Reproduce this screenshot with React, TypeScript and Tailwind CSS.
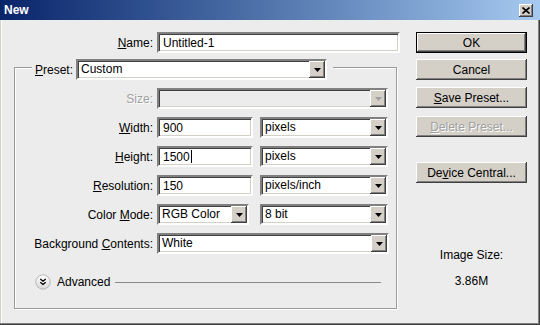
import React from "react";

const sunken =
  "border-2 border-t-[#808080] border-l-[#808080] border-b-white border-r-white shadow-[inset_1px_1px_0_#404040,inset_-1px_-1px_0_#d4d0c8]";
const raised =
  "bg-[#d4d0c8] shadow-[inset_-1px_-1px_0_#404040,inset_1px_1px_0_#ffffff,inset_-2px_-2px_0_#808080]";
const etched = "[text-shadow:1px_1px_0_#ffffff]";

function Arrow({ disabled }: { disabled?: boolean }) {
  return (
    <div className={`w-[16px] h-full flex items-center justify-center ${raised}`}>
      <svg width="7" height="4" viewBox="0 0 7 4">
        <polygon points="0,0 7,0 3.5,4" fill={disabled ? "#a0a0a0" : "#000"} />
      </svg>
    </div>
  );
}

function Select({ value, width, disabled }: { value?: string; width: string; disabled?: boolean }) {
  return (
    <div className={`${width} h-[21px] flex ${sunken} ${disabled ? "bg-[#ececec]" : "bg-white"}`}>
      <div className="flex-1 pl-[3px] leading-[17px]">{value}</div>
      <Arrow disabled={disabled} />
    </div>
  );
}

function Input({ value, width, caret }: { value: string; width: string; caret?: boolean }) {
  return (
    <div className={`${width} h-[21px] bg-white flex items-center pl-[4px] ${sunken}`}>
      <span>{value}</span>
      {caret && <span className="w-px h-[13px] bg-black ml-px" />}
    </div>
  );
}

function Label({ children, disabled }: { children: React.ReactNode; disabled?: boolean }) {
  return (
    <div className={`w-[142px] pr-[4px] text-right ${disabled ? `text-[#a0a0a0] ${etched}` : ""}`}>
      {children}
    </div>
  );
}

function Row({
  label,
  children,
  disabled,
  gap = "gap-[7px]",
}: {
  label: React.ReactNode;
  children: React.ReactNode;
  disabled?: boolean;
  gap?: string;
}) {
  return (
    <div className="h-[21px] flex items-center">
      <Label disabled={disabled}>{label}</Label>
      <div className={`flex ${gap}`}>{children}</div>
    </div>
  );
}

function Button({ children, def, disabled }: { children: React.ReactNode; def?: boolean; disabled?: boolean }) {
  return (
    <div
      className={`w-[111px] h-[21px] flex items-center justify-center ${raised} ${def ? "border border-black" : ""} ${
        disabled ? `text-[#a0a0a0] ${etched}` : ""
      }`}
    >
      {children}
    </div>
  );
}

export default function App() {
  return (
    <div className="w-[540px] h-[325px] flex flex-col bg-[#ececec] text-[12px] text-black overflow-hidden font-['Liberation_Sans',Arial,sans-serif]">
      {/* title bar */}
      <div className="h-[20px] flex items-center justify-between pl-[4px] pr-[7px] bg-linear-to-r from-[#0a246a] to-[#a6caf0]">
        <span className="text-white font-bold text-[12px]">New</span>
        <div className={`w-[14px] h-[13px] flex items-center justify-center ${raised}`}>
          <svg width="8" height="7" viewBox="0 0 8 7">
            <path d="M0.5 0.5 L7.5 6.5 M7.5 0.5 L0.5 6.5" stroke="#000" strokeWidth="1.6" />
          </svg>
        </div>
      </div>

      {/* body */}
      <div className="flex-1 flex shadow-[inset_-1px_-1px_0_#404040,inset_-2px_-2px_0_#808080,inset_1px_0_0_#d4d0c8,inset_2px_0_0_#ffffff]">
        <div className="w-[400px] pt-[12px]">
          <div className="h-[21px] flex items-center">
            <div className="w-[157px] pr-[4px] text-right">
              <u>N</u>ame:
            </div>
            <Input value="Untitled-1" width="w-[243px]" />
          </div>

          {/* group box */}
          <div className="ml-[14px] mt-[14px] w-[383px] h-[242px] border border-[#9a9a9a] shadow-[inset_1px_1px_0_#ffffff,1px_1px_0_#ffffff]">
            <div className="-mt-[9px] ml-[17px] w-fit flex items-center gap-[3px] px-[3px] pr-[6px] bg-[#ececec]">
              <span>
                <u>P</u>reset:
              </span>
              <Select value="Custom" width="w-[251px]" />
            </div>

            <div className="mt-[8px] flex flex-col gap-[8px]">
              <Row label="Size:" disabled>
                <Select width="w-[231px]" disabled />
              </Row>
              <Row label={<><u>W</u>idth:</>}>
                <Input value="900" width="w-[96px]" />
                <Select value="pixels" width="w-[128px]" />
              </Row>
              <Row label={<><u>H</u>eight:</>}>
                <Input value="1500" width="w-[96px]" caret />
                <Select value="pixels" width="w-[128px]" />
              </Row>
              <Row label={<><u>R</u>esolution:</>}>
                <Input value="150" width="w-[96px]" />
                <Select value="pixels/inch" width="w-[128px]" />
              </Row>
              <Row label={<>Color <u>M</u>ode:</>} gap="gap-[11px]">
                <Select value="RGB Color" width="w-[92px]" />
                <Select value="8 bit" width="w-[128px]" />
              </Row>
              <Row label={<>Background <u>C</u>ontents:</>}>
                <Select value="White" width="w-[232px]" />
              </Row>
            </div>

            <div className="mt-[20px] ml-[20px] mr-[15px] h-[16px] flex items-center">
              <svg width="16" height="16" viewBox="0 0 16 16">
                <defs>
                  <linearGradient id="adv" x1="0" y1="0" x2="0" y2="1">
                    <stop offset="0" stopColor="#ffffff" />
                    <stop offset="1" stopColor="#d8d8d8" />
                  </linearGradient>
                </defs>
                <circle cx="8" cy="8" r="7.2" fill="url(#adv)" stroke="#b0b0b0" strokeWidth="0.9" />
                <path d="M5.3 5 L8 7.2 L10.7 5 M5.3 8.3 L8 10.5 L10.7 8.3" fill="none" stroke="#000" strokeWidth="1.3" />
              </svg>
              <span className="ml-[6px]">Advanced</span>
              <div className="flex-1 ml-[5px] h-px bg-[#8a8a8a]" />
            </div>
          </div>
        </div>

        {/* buttons */}
        <div className="ml-[16px] w-[111px] flex flex-col items-center">
          <div className="mt-[12px]">
            <Button def>OK</Button>
          </div>
          <div className="mt-[6px]">
            <Button>Cancel</Button>
          </div>
          <div className="mt-[7px]">
            <Button>
              <span>
                <u>S</u>ave Preset...
              </span>
            </Button>
          </div>
          <div className="mt-[8px]">
            <Button disabled>
              <span>
                <u>D</u>elete Preset...
              </span>
            </Button>
          </div>
          <div className="mt-[25px]">
            <Button>
              <span>
                De<u>v</u>ice Central...
              </span>
            </Button>
          </div>
          <div className="mt-[65px] leading-[14px]">Image Size:</div>
          <div className="mt-[12px] leading-[14px]">3.86M</div>
        </div>
      </div>
    </div>
  );
}
